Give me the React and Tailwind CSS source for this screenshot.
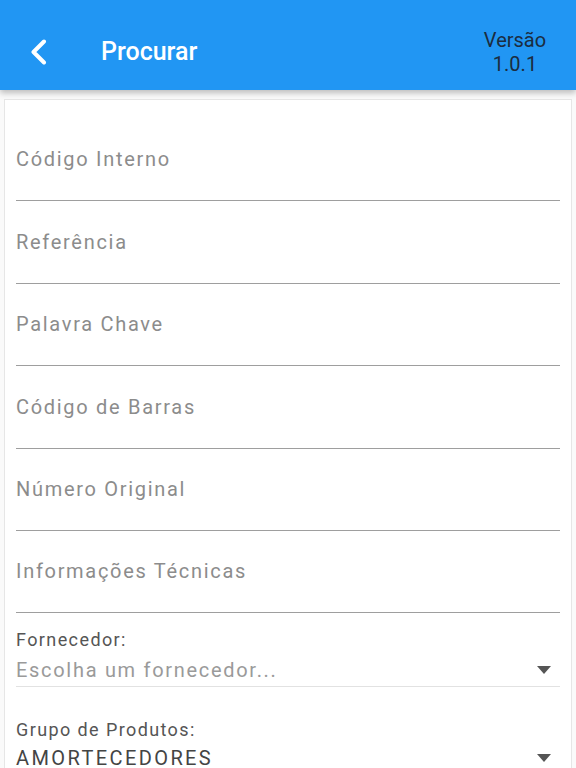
const FIELDS = [
  'Código Interno',
  'Referência',
  'Palavra Chave',
  'Código de Barras',
  'Número Original',
  'Informações Técnicas',
];

function Caret() {
  return (
    <svg width="14" height="8" viewBox="0 0 14 8" className="shrink-0">
      <path d="M0 0 L14 0 L7 8 Z" fill="#555" />
    </svg>
  );
}

function SelectField({ label, value, placeholder, last }) {
  return (
    <div className={last ? 'pt-[32px]' : 'pt-[16px]'}>
      <p className="text-[18px] leading-[22px] text-[#555] tracking-[1.4px]">{label}</p>
      <div className={`flex items-center justify-between pr-[9px] h-[34px] ${last ? '' : 'mt-[2px] border-b border-[#e2e2e2]'}`}>
        <span className={`text-[20px] ${placeholder ? 'text-[#9a9a9a] tracking-[1.7px]' : 'text-[#444] tracking-[2.4px]'}`}>{value}</span>
        <Caret />
      </div>
    </div>
  );
}

export default function App() {
  return (
    <div className="h-[768px] overflow-hidden bg-[#fafafa]" style={{ fontFamily: 'Roboto, "Liberation Sans", sans-serif' }}>
      {/* Header */}
      <div className="relative z-10 h-[90px] pt-[14px] bg-[#2196f3] flex items-center shadow-[0_3px_6px_rgba(0,0,0,0.25)]">
        <div className="w-[101px] pl-[30px]">
          <svg width="18" height="26" viewBox="0 0 18 26">
            <path d="M14 2.5 L3.5 13 L14 23.5" fill="none" stroke="#fff" strokeWidth="4" strokeLinecap="round" strokeLinejoin="round" />
          </svg>
        </div>
        <h1 className="flex-1 text-[25px] font-medium text-white">Procurar</h1>
        <div className="w-[100px] mr-[11px] text-center text-[20px] leading-[24px] text-[#1b2c40]">
          <p>Versão</p>
          <p>1.0.1</p>
        </div>
      </div>

      {/* Form card */}
      <div className="mx-[4px] mt-[9px] pt-[19px] bg-white border border-[#e6e6e6] px-[11px] h-[720px]">
        {FIELDS.map(f => (
          <div key={f} className="h-[82.4px] flex items-end border-b-[1.5px] border-[#9e9e9e]">
            <span className="text-[20px] tracking-[1.7px] text-[#8c8c8c] mb-[26px]">{f}</span>
          </div>
        ))}
        <SelectField label="Fornecedor:" value="Escolha um fornecedor..." placeholder />
        <SelectField label="Grupo de Produtos:" value="AMORTECEDORES" last />
      </div>
    </div>
  );
}
